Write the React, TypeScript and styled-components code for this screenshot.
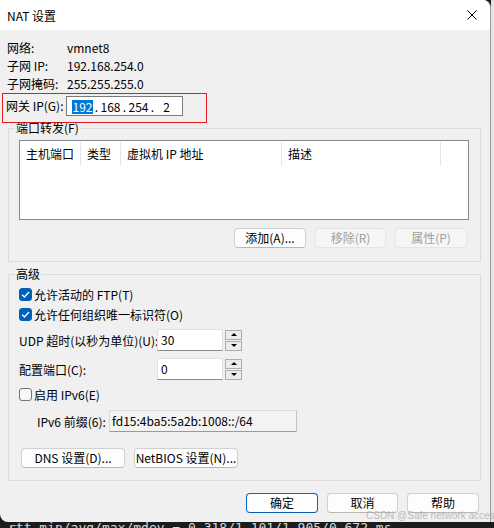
import styled, { createGlobalStyle } from 'styled-components';

const GlobalStyle = createGlobalStyle`
    html, body {
        margin: 0;
        padding: 0;
        background: #1e1e1e;
    }
    body {
        font-family: "Noto Sans CJK SC", "Noto Sans", sans-serif;
        font-size: 12px;
        color: #000;
    }
    * {
        box-sizing: border-box;
    }
`;

const Screen = styled.div`
    position: relative;
    width: 494px;
    height: 528px;
    overflow: hidden;
    display: flex;
    flex-direction: column;
    background: #1c1c1c;
`;

const TopArea = styled.div`
    display: flex;
    height: 522px;
`;

const Dialog = styled.div`
    width: 491px;
    display: flex;
    flex-direction: column;
    border-right: 1px solid #9a9a9a;
    border-radius: 0 8px 0 8px;
    overflow: hidden;
    background: #f0f0f0;
`;

const SideStrip = styled.div`
    width: 3px;
    background: #e4e4e4;
`;

const BottomStrip = styled.div`
    height: 6px;
    overflow: hidden;
    padding-left: 8px;
    font-family: "DejaVu Sans Mono", monospace;
    font-size: 13px;
    line-height: 12px;
    color: #d8d8d8;
    white-space: nowrap;
`;

const TitleBar = styled.div`
    height: 30px;
    flex-shrink: 0;
    display: flex;
    align-items: center;
    justify-content: space-between;
    padding: 0 10px 0 7px;
    background: #fff;
    font-size: 12px;
`;

const CloseButton = styled.button`
    width: 16px;
    height: 16px;
    padding: 0;
    border: none;
    background: transparent;
    display: flex;
    align-items: center;
    justify-content: center;
`;

const Body = styled.div`
    flex: 1;
    display: flex;
    flex-direction: column;
    padding: 0 9px 0 8px;
`;

const InfoList = styled.div`
    display: flex;
    flex-direction: column;
    margin-left: -1px;
    padding-top: 8px;
`;

const InfoRow = styled.div`
    display: flex;
    align-items: center;
    height: 18px;
`;

const InfoLabel = styled.span`
    width: 60px;
    flex-shrink: 0;
`;

const GatewayBox = styled.div`
    display: flex;
    align-items: flex-start;
    width: 205px;
    height: 30px;
    margin: 1px 0 0 -5px;
    padding: 2px 0 0 3px;
    border: 1px solid #e5191f;
`;

const GatewayLabel = styled.span`
    width: 60px;
    height: 20px;
    line-height: 20px;
    flex-shrink: 0;
`;

const IpInput = styled.div`
    width: 117px;
    height: 20px;
    display: flex;
    align-items: center;
    padding-left: 4px;
    border: 1px solid #7a7a7a;
    background: #fff;
`;

const Octet = styled.span`
    width: 23px;
    text-align: center;
`;

const Selected = styled.span`
    padding: 0 1px;
    line-height: 14px;
    display: inline-block;
    background: #0078d7;
    color: #fff;
`;

const Dot = styled.span`
    width: 5px;
    text-align: center;
`;

const GroupBox = styled.fieldset<{ $mt?: number }>`
    margin: ${(p) => p.$mt ?? 0}px 0 0 0;
    padding: ${(p) => (p.$mt ? 6 : 7)}px 11px ${(p) => (p.$mt ? 12 : 13)}px 6px;
    border: 1px solid #dcdcdc;
    min-width: 0;
`;

const Legend = styled.legend`
    padding: 0 1px;
    line-height: 10px;
    font-size: 12px;
`;

const ListBox = styled.div`
    margin-left: 4px;
    height: 80px;
    border: 1px solid #828790;
    background: #fff;
`;

const ListHeader = styled.div`
    display: flex;
    height: 25px;
`;

const HeaderCell = styled.div<{ $w: number }>`
    width: ${(p) => p.$w}px;
    padding-left: 6px;
    margin-top: 1px;
    height: 24px;
    line-height: 24px;
    border-right: 1px solid #e5e5e5;
    white-space: nowrap;
`;

const ButtonRow = styled.div<{ $mt: number; $justify?: string }>`
    display: flex;
    justify-content: ${(p) => p.$justify ?? 'flex-end'};
    gap: 9px;
    margin: ${(p) => p.$mt}px 2px 0 ${(p) => (p.$justify ? 6 : 0)}px;
`;

const Button = styled.button<{ $w: number; $primary?: boolean }>`
    width: ${(p) => p.$w}px;
    height: 20px;
    padding: 0;
    font-family: inherit;
    font-size: 12px;
    line-height: 18px;
    color: #000;
    background: #fdfdfd;
    border: 1px solid ${(p) => (p.$primary ? '#0a64c2' : '#d0d0d0')};
    border-bottom-color: ${(p) => (p.$primary ? '#0a5ab0' : '#b8b8b8')};
    border-radius: 4px;
    white-space: nowrap;

    &:disabled {
        color: #9f9f9f;
        background: #f6f6f6;
        border-color: #e5e5e5;
    }
`;

const Stack = styled.div`
    display: flex;
    flex-direction: column;
    margin-left: 4px;
`;

const CheckRow = styled.label<{ $mt: number }>`
    display: flex;
    align-items: center;
    gap: 2px;
    height: 18px;
    margin-top: ${(p) => p.$mt}px;
`;

const Box = styled.span<{ $checked?: boolean }>`
    width: 13px;
    height: 13px;
    border-radius: 3px;
    display: flex;
    align-items: center;
    justify-content: center;
    background: ${(p) => (p.$checked ? '#005fb8' : '#f8f8f8')};
    border: 1px solid ${(p) => (p.$checked ? '#005fb8' : '#747474')};
`;

const FieldRow = styled.div<{ $mt: number; $indent?: number }>`
    display: flex;
    align-items: center;
    margin-top: ${(p) => p.$mt}px;
    margin-left: ${(p) => p.$indent ?? 0}px;
`;

const FieldLabel = styled.span<{ $w: number }>`
    width: ${(p) => p.$w}px;
    flex-shrink: 0;
    white-space: nowrap;
`;

const TextInput = styled.div<{ $h: number }>`
    width: 66px;
    height: ${(p) => p.$h}px;
    line-height: ${(p) => p.$h - 2}px;
    padding-left: 3px;
    background: #fff;
    border: 1px solid #e2e2e2;
    border-bottom-color: #8a8a8a;
`;

const Spin = styled.div`
    display: flex;
    flex-direction: column;
    gap: 1px;
    margin-left: 2px;
`;

const SpinButton = styled.div<{ $down?: boolean }>`
    width: 17px;
    height: 10px;
    display: flex;
    align-items: center;
    justify-content: center;
    background: #ececec;
    border: 1px solid #adadad;

    &::after {
        content: '';
        border-left: 3px solid transparent;
        border-right: 3px solid transparent;
        ${(p) => (p.$down ? 'border-top: 3px solid #000;' : 'border-bottom: 3px solid #000;')}
    }
`;

const ReadOnlyField = styled.div`
    width: 188px;
    height: 22px;
    line-height: 20px;
    padding-left: 2px;
    background: #f3f3f3;
    border: 1px solid #dadada;
    border-right-color: #c4c4c4;
    border-bottom-color: #9a9a9a;
`;

const Watermark = styled.div`
    position: absolute;
    left: 366px;
    top: 510px;
    font-family: "Liberation Sans", sans-serif;
    font-size: 10px;
    color: rgba(150, 150, 150, 0.6);
    white-space: nowrap;
`;

const Check = () => (
    <svg width="9" height="9" viewBox="0 0 9 9">
        <path d="M1 4.6 L3.4 7 L8 2" fill="none" stroke="#fff" strokeWidth="1.3" />
    </svg>
);

const CloseIcon = () => (
    <svg width="10" height="10" viewBox="0 0 10 10">
        <path d="M0.5 0.5 L9.5 9.5 M9.5 0.5 L0.5 9.5" stroke="#000" strokeWidth="1" />
    </svg>
);

export default function App() {
    return (
        <Screen>
            <GlobalStyle />
            <TopArea>
                <Dialog>
                    <TitleBar>
                        <span>NAT 设置</span>
                        <CloseButton type="button" aria-label="关闭">
                            <CloseIcon />
                        </CloseButton>
                    </TitleBar>
                    <Body>
                        <InfoList>
                            <InfoRow>
                                <InfoLabel>网络:</InfoLabel>
                                <span>vmnet8</span>
                            </InfoRow>
                            <InfoRow>
                                <InfoLabel>子网 IP:</InfoLabel>
                                <span>192.168.254.0</span>
                            </InfoRow>
                            <InfoRow>
                                <InfoLabel>子网掩码:</InfoLabel>
                                <span>255.255.255.0</span>
                            </InfoRow>
                            <GatewayBox>
                                <GatewayLabel>网关 IP(G):</GatewayLabel>
                                <IpInput>
                                    <Octet>
                                        <Selected>192</Selected>
                                    </Octet>
                                    <Dot>.</Dot>
                                    <Octet>168</Octet>
                                    <Dot>.</Dot>
                                    <Octet>254</Octet>
                                    <Dot>.</Dot>
                                    <Octet>2</Octet>
                                </IpInput>
                            </GatewayBox>
                        </InfoList>

                        <GroupBox>
                            <Legend>端口转发(F)</Legend>
                            <ListBox>
                                <ListHeader>
                                    <HeaderCell $w={61}>主机端口</HeaderCell>
                                    <HeaderCell $w={40}>类型</HeaderCell>
                                    <HeaderCell $w={161}>虚拟机 IP 地址</HeaderCell>
                                    <HeaderCell $w={159}>描述</HeaderCell>
                                </ListHeader>
                            </ListBox>
                            <ButtonRow $mt={8}>
                                <Button $w={72}>添加(A)...</Button>
                                <Button $w={71} disabled>
                                    移除(R)
                                </Button>
                                <Button $w={72} disabled>
                                    属性(P)
                                </Button>
                            </ButtonRow>
                        </GroupBox>

                        <GroupBox $mt={7}>
                            <Legend>高级</Legend>
                            <Stack>
                                <CheckRow $mt={0}>
                                    <Box $checked>
                                        <Check />
                                    </Box>
                                    <span>允许活动的 FTP(T)</span>
                                </CheckRow>
                                <CheckRow $mt={2}>
                                    <Box $checked>
                                        <Check />
                                    </Box>
                                    <span>允许任何组织唯一标识符(O)</span>
                                </CheckRow>
                                <FieldRow $mt={6}>
                                    <FieldLabel $w={138}>UDP 超时(以秒为单位)(U):</FieldLabel>
                                    <TextInput $h={22}>30</TextInput>
                                    <Spin>
                                        <SpinButton />
                                        <SpinButton $down />
                                    </Spin>
                                </FieldRow>
                                <FieldRow $mt={7}>
                                    <FieldLabel $w={138}>配置端口(C):</FieldLabel>
                                    <TextInput $h={22}>0</TextInput>
                                    <Spin>
                                        <SpinButton />
                                        <SpinButton $down />
                                    </Spin>
                                </FieldRow>
                                <CheckRow $mt={5}>
                                    <Box />
                                    <span>启用 IPv6(E)</span>
                                </CheckRow>
                                <FieldRow $mt={7} $indent={18}>
                                    <FieldLabel $w={72}>IPv6 前缀(6):</FieldLabel>
                                    <ReadOnlyField>fd15:4ba5:5a2b:1008::/64</ReadOnlyField>
                                </FieldRow>
                            </Stack>
                            <ButtonRow $mt={16} $justify="flex-start">
                                <Button $w={104}>DNS 设置(D)...</Button>
                                <Button $w={104}>NetBIOS 设置(N)...</Button>
                            </ButtonRow>
                        </GroupBox>

                        <ButtonRow $mt={12}>
                            <Button $w={72} $primary>
                                确定
                            </Button>
                            <Button $w={71}>取消</Button>
                            <Button $w={72}>帮助</Button>
                        </ButtonRow>
                    </Body>
                </Dialog>
                <SideStrip />
            </TopArea>
            <BottomStrip>rtt min/avg/max/mdev = 0.318/1.101/1.905/0.672 ms</BottomStrip>
            <Watermark>CSDN @Safe network access</Watermark>
        </Screen>
    );
}
